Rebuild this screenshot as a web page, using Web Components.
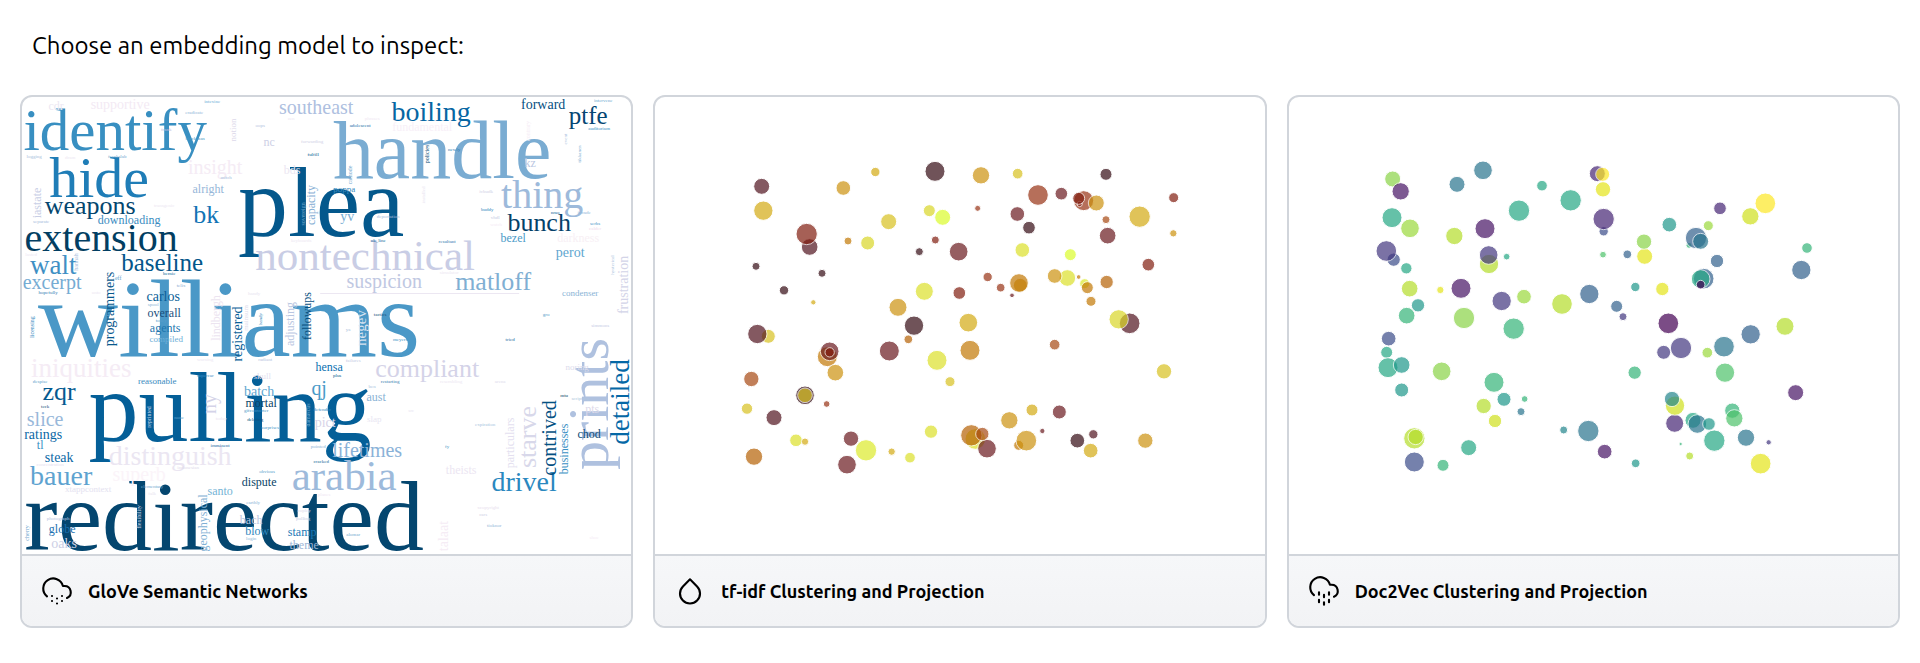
<!DOCTYPE html>
<html lang="en">
<head>
<meta charset="utf-8">
<meta name="viewport" content="width=device-width, initial-scale=1">
<title>Embedding models</title>
<style>
  body { margin: 0; background: #fff; color: #000; font-family: Ubuntu, "Noto Sans", "Open Sans", sans-serif; }
</style>
</head>
<body>
<model-picker>
  <span slot="heading">Choose an embedding model to inspect:</span>
  <embedding-card href="#glove">
    <word-cloud slot="preview"></word-cloud>
    <weather-icon slot="icon" name="snow"></weather-icon>
    GloVe Semantic Networks
  </embedding-card>
  <embedding-card href="#tfidf">
    <scatter-plot slot="preview" data="tfidf"></scatter-plot>
    <weather-icon slot="icon" name="drop"></weather-icon>
    tf-idf Clustering and Projection
  </embedding-card>
  <embedding-card href="#doc2vec">
    <scatter-plot slot="preview" data="doc2vec"></scatter-plot>
    <weather-icon slot="icon" name="drizzle"></weather-icon>
    Doc2Vec Clustering and Projection
  </embedding-card>
</model-picker>

<template id="model-picker">
  <style>
    :host { display: block; padding: 28px 20px 20px; }
    h1 { margin: 0 0 31px; padding: 0 12px; font-size: 24px; line-height: 36px; font-weight: 400; }
    .cards { display: grid; grid-template-columns: repeat(3, minmax(0, 1fr)); gap: 20px; }
  </style>
  <h1><slot name="heading"></slot></h1>
  <div class="cards"><slot></slot></div>
</template>

<template id="embedding-card">
  <style>
    :host { display: block; }
    a { display: block; overflow: hidden; border: 2px solid #d1d5db; border-radius: 12px; color: inherit; text-decoration: none; }
    .bar { display: flex; align-items: center; gap: 16px; padding: 20px; border-top: 2px solid #d1d5db;
           background: linear-gradient(#f6f7f9, #f2f3f5); font-size: 18px; line-height: 30px; font-weight: 700; }
  </style>
  <a>
    <slot name="preview"></slot>
    <div class="bar"><slot name="icon"></slot><span><slot></slot></span></div>
  </a>
</template>

<script>
const stamp = (host, id) => {
  const root = host.attachShadow({ mode: "open" });
  root.append(document.getElementById(id).content.cloneNode(true));
  return root;
};

customElements.define("model-picker", class extends HTMLElement {
  constructor() { super(); stamp(this, "model-picker"); }
});

customElements.define("embedding-card", class extends HTMLElement {
  constructor() { super(); stamp(this, "embedding-card"); }
  connectedCallback() { this.shadowRoot.querySelector("a").href = this.getAttribute("href"); }
});

const ICONS = {
  snow: '<path d="M20 17.58A5 5 0 0 0 18 8h-1.26A8 8 0 1 0 4 16.25M8 16h.01M8 20h.01M12 18h.01M12 22h.01M16 16h.01M16 20h.01"/>',
  drop: '<path d="M12 2.69l5.66 5.66a8 8 0 1 1-11.31 0z"/>',
  drizzle: '<path d="M8 19v2M8 13v2M16 19v2M16 13v2M12 21v2M12 15v2M20 16.58A5 5 0 0 0 18 7h-1.26A8 8 0 1 0 4 15.25"/>'
};
customElements.define("weather-icon", class extends HTMLElement {
  connectedCallback() {
    if (this.shadowRoot) return;
    this.attachShadow({ mode: "open" }).innerHTML = `
      <style>:host { display: block; width: 30px; height: 30px; flex: none; } svg { display: block; overflow: visible; }</style>
      <svg viewBox="0 0 24 24" width="30" height="30" fill="none" stroke="#000" stroke-width="1.7"
        stroke-linecap="round" stroke-linejoin="round" aria-hidden="true">${ICONS[this.getAttribute("name")]}</svg>`;
  }
});

// word | centre x | baseline y | size | colour | v = runs upwards
const WORDS = `
williams|229|356|111|4a98c7
redirected|224|550|100|04466f
pulling|230|441|100|045f98
plea|321|236|100|04588c
handle|442|178|82|7aacd2
identify|115|150|59|388fc1
hide|99|197|58|1f7db7
prints|608|404|58|afc1df|v
nontechnical|365|270|43|c9cde5
arabia|344|490|43|9dbadb
thing|542|208|40|9dbadb
extension|101|251|40|023e62
distinguish|170|465|28|ebe6f2
boiling|431|121|28|0666a3
bauer|61|485|28|5ea3d0
drivel|524|491|28|2a88bf
detailed|629|402|27|0568a6|v
iniquities|81|377|27|f5ecf5
walt|53|274|27|3f90c4
compliant|427|377|26|d4d3e8
starve|536|437|26|d8d8ea|v
weapons|90|214|26|04466e
bk|206|223|26|1274b5
matloff|493|290|26|80afd3
bunch|539|231|26|044169
zqr|59|400|26|045a90
baseline|162|271|25|04568a
ptfe|588|124|25|044673
excerpt|52|289|20|76acd3
insight|215|174|20|f5ecf5
southeast|316|114|20|aebfdf
suspicion|384|288|20|c0c8e2
qj|319|395|20|4a9ac8
slice|45|426|20|98b8da
superb|139|481|20|fbf4f9
lifetimes|367|457|20|8ab2d8
ny|216|404|20|d4d3e8|v
contrived|556|438|20|045082|v
negev|366|328|15|d6e2f0|v
programmers|114|309|14|08588c|v
registered|242|334|14|0a5f98|v
frustration|628|285|14|d3d4e8|v
talaat|448|536|14|f5ecf5|v
supportive|120|109|14|f3eaf4
carlos|163|301|14|0a5f98
forward|543|109|14|045082
yv|347|221|14|76acd3
perot|570|257|14|5ea6cf
batch|259|396|14|5ea6d0
ratings|43|439|14|0a68a6
steak|59|462|14|0a68a6
pict|325|427|14|d8d4e8
oaks|64|548|14|cdcfe5
downloading|129|224|12|3a8bc0
alright|208|193|12|96b6d8
cdr|56|110|12|ece7f2
nc|269|146|12|cdd0e6
bds|292|174|12|ece7f2
iastate|41|203|12|c8cee5|v
capacity|315|205|12|88b0d5|v
overall|164|317|12|1a4f7c
agents|165|332|12|1e76ae
lindbergh|220|318|12|ece4f0|v
adjusting|294|324|12|b9c6e1|v
followups|311|316|12|08507f|v
fundamental|422|131|12|f8f0f8
kz|530|167|12|b9c6e1
bezel|513|242|12|4a9ac8
darkness|578|242|12|f8f0f5
hensa|329|371|12|0a70b0
aust|376|401|12|8ab2d5
mortal|261|407|12|083f66
tl|40|449|12|3a90c4
dispute|259|486|12|083f66
santo|220|495|12|76b4d6
geophysical|207|523|12|7fb0d4|v
bach|251|524|12|b9c6e1
blow|257|535|12|2f86bd
stamp|302|536|12|1a78b5
theme|304|549|12|9db5d6
globe|62|533|12|1a70b0
theists|461|474|12|ece6f2
particulars|514|443|12|e4dff0|v
businesses|568|449|12|3a90c4|v
pts|592|413|12|ddd9ea
chod|589|438|12|0a4a75
notion|236|130|9|ddd9ea|v
compiled|166|342|9|6fb0d8
poppa|344|192|9|3a8bc0
condenser|580|296|9|8ab4d6
skull|262|379|9|e4dff0
reasonable|157|384|9|3a8bc0
xtappcontext|88|492|9|e4e2f0
slap|374|422|9|e8e6f2
noring|577|370|9|dcdcec
intexine|212|103|5|6aaed6
eradicate|194|114|5|8fb6d8
frank|166|131|5|c0c0e0
blackman|195|140|5|4a98c7
oops|260|127|5|b5c4e0
zen|291|120|5|ece7f2
forwarding|312|143|5|d0d1e6
fulfill|313|156|5|045a8d
logging|34|158|5|a6bddb
dram|70|159|5|ece7f2
frankslab|117|158|5|74a9cf
mitch|226|179|5|a6bddb
transgenic|164|207|5|ece7f2
separate|41|223|5|a6bddb
sovereign|305|214|6|74a9cf|v
lasted|31|256|5|ece7f2
hannah|78|262|6|a6bddb|v
bernie|169|275|5|0a5f95
eff|118|280|6|5fa3cd
hopefully|48|294|5|2f7ab0
telix|181|287|5|88aed0
unto|96|294|5|ece7f2
keyboards|301|242|5|ece7f2
handy|254|295|5|e8e4f0
spool|153|306|5|8ab4d6
toney|161|322|5|5a9fcc
licensing|34|327|6|2f86bd|v
mainsum|248|318|7|dcdcec|v
handy|262|319|5|2a80b8|v
intervene|603|102|5|6aa8d0
auditorium|599|130|5|3a90c4
phrases|372|120|5|f0e8f3
adolescent|360|127|5|1a70a8
policies|429|154|6|044a75|v
newly|454|151|5|2a78b0
contrary|530|131|6|f5ecf5|v
event|567|139|5|a6bddb|v
tikkanen|581|154|5|74a9cf|v
cathode|352|175|6|74a9cf|v
ivbudk|486|193|5|d0d1e6
installed|425|195|5|e8e4f0|v
deportation|388|218|5|a6bddb
buddy|487|211|5|2f86bd
vhdl|495|219|5|c5cbe4
watch|496|226|5|f5ecf5
nrao|555|214|5|0a5f98
invade|584|214|5|8fb6d8
serbs|595|225|5|4a98c7
calder|595|230|5|f0dcec
ok_line|378|242|5|0a5f98
resultant|447|243|5|2f7ab0
hysterical|614|265|5|a6bddb|v
simmons|600|327|5|c5cbe4
gro|546|316|5|4a98c7
tactics|380|316|5|1a4f7c
simulator|449|274|5|ece7f2
ya|348|331|5|a6bddb
meyers|400|341|5|3a90c4
tried|510|341|5|1a6aa0
failures|353|362|5|c5cbe4
plus|337|377|5|045a8d
restarting|390|383|5|3a80b0
resembling|451|383|5|ece7f2
arena|500|383|5|dcdcec
ben|372|388|5|a6c4de
gifconverter|256|412|5|4a98c7
deleting|255|421|5|0a4f80
surprises|270|429|5|4a98c7
supercar|205|377|5|3a90c4
warning|205|361|5|ece7f2
radiant|265|361|5|b5c4e0
despise|40|383|5|5a9fcc
teck|45|408|5|1a4f7c
concentration|50|466|5|e4e0f0
reprinted|151|417|6|c5d4e8|v
none|179|419|5|5a9fcc
today|221|420|5|ece7f2
imminent|220|447|5|1a6aa0
damascus|310|415|6|74a9cf|v
defender|322|411|5|2f86bd
src|411|412|5|e8e6f2
pointed|318|448|5|8ab4d6
cracked|321|463|5|1a6a9a
obvious|267|473|5|5a9fcc
earthly|253|504|5|8ab4d6
login|251|540|5|8ab4d6
polling|303|520|5|c5cbe4
copley|304|512|5|e0dcec
alomar|353|536|5|74a9cf
planes|324|496|5|f0e8f3
indonesian|188|469|5|ddd9ea
elementary|152|488|5|74a9cf
falk|152|495|5|e8e4f0
flexibility|141|517|6|d0d8ea|v
photograph|58|520|5|b5c4e0
cherry|29|533|6|74a9cf|v
mtu|564|397|5|083f66
scripting|580|400|5|b0c8e0
expiration|485|426|5|a6c4de
fy|447|448|5|4a98c7
xcopyright|488|509|5|e8e0ee
cars|483|516|5|d0d1e6
tioknor|494|527|5|8fb6d8
shoe|594|539|5|f5ecf5`;

customElements.define("word-cloud", class extends HTMLElement {
  connectedCallback() {
    if (this.shadowRoot) return;
    const words = WORDS.trim().split("\n").map(line => {
      const [text, x, y, size, colour, up] = line.split("|");
      const place = up ? `transform="translate(${x} ${y}) rotate(-90)"` : `x="${x}" y="${y}"`;
      return `<text ${place} font-size="${size}" fill="#${colour}">${text}</text>`;
    }).join("");
    this.attachShadow({ mode: "open" }).innerHTML = `
      <style>
        :host { display: block; }
        svg { display: block; width: 100%; aspect-ratio: 4 / 3; }
        text { font-family: "Liberation Serif", serif; text-anchor: middle; }
      </style>
      <svg viewBox="22 97 609 457" role="img" aria-label="Word cloud">
        <rect x="320" y="293" width="199" height="1" fill="#ece7f2"/>${words}
      </svg>`;
  }
});

// Each point: x y radius colour-key
const PLOTS = {
  tfidf: {
    viewBox: "-225 -159 1828 1371",
    colours: { K: "#340b13", M: "#51131f", R: "#6a1a1f", S: "#811d10", T: "#983315", U: "#a84a13", O: "#b66205",
      P: "#c27906", Q: "#cd9210", V: "#d4ab13", W: "#d8c120", X: "#dad728", Y: "#dce02a", Z: "#dcea2a", L: "#dbfc2a" },
    points: `95 109 23 M,100 182 28 V,340 114 21 Q,436 66 13 V,615 64 29 K,753 76 25 Q,863 71 15 W,924 135 30 T,994 131 18 R,
1128 73 17 K,1061 152 29 T,1049 162 7 S,1046 145 17 S,1099 159 23 Q,1331 143 14 S,743 175 8 T,598 182 17 X,638 202 23 L,
476 215 23 W,862 192 21 R,897 233 18 K,1128 209 11 U,1229 200 31 V,1330 250 10 Q,1133 257 24 R,239 291 24 M,230 252 31 S,
354 273 11 P,413 279 20 X,616 270 11 S,568 305 11 K,686 305 27 R,877 300 21 Y,1021 314 17 L,1255 344 18 S,78 349 11 K,
276 370 11 K,162 421 13 K,250 457 7 V,773 381 13 T,871 406 20 Q,867 399 27 P,812 413 12 T,846 436 6 R,1012 384 24 Y,
974 378 21 Q,1046 381 6 P,1064 401 14 Z,1072 413 17 P,1130 396 19 O,1083 454 14 P,583 424 26 Y,688 429 18 S,504 472 26 Q,
552 527 28 K,715 518 27 V,1199 520 30 M,1166 508 28 X,115 559 20 W,82 552 28 M,535 568 12 O,478 603 29 R,720 601 29 P,
292 620 29 P,299 604 27 R,299 607 13 S,974 584 15 U,316 668 24 Q,621 631 29 Y,64 687 22 U,660 695 14 W,1302 664 22 W,
225 736 27 K,225 736 21 W,290 762 9 T,51 776 16 W,132 803 23 M,198 871 18 Y,225 875 10 V,363 866 22 R,603 845 19 Y,
408 901 31 Z,351 944 27 R,485 905 10 V,540 923 15 Y,72 920 25 O,736 867 30 Y,771 896 27 R,724 856 31 O,757 852 19 U,
838 811 25 Q,906 780 17 V,988 786 20 R,937 843 7 R,866 886 14 P,889 872 30 Q,1042 872 21 K,1090 853 13 M,1082 902 21 V,1246 872 22 Q`
  },
  doc2vec: {
    viewBox: "-214 -159 1828 1371",
    colours: { A: "#440154", B: "#471365", C: "#462474", D: "#43377f", E: "#3c4d8a", F: "#32618d", G: "#29748e", H: "#23868d",
      I: "#1f988b", J: "#25a884", K: "#35b478", L: "#4ec26a", M: "#72cf56", N: "#8ad347", O: "#9bd93c", P: "#b5de2b", Q: "#cfe11c", R: "#e4e419", S: "#fde725" },
    points: `97 87 23 N,121 124 25 B,95 203 29 J,149 235 27 O,100 329 19 E,78 303 30 D,138 355 16 J,148 416 24 P,173 466 19 I,139 497 24 K,
85 566 21 E,79 607 17 J,83 653 29 J,124 645 24 I,124 720 20 I,290 103 23 G,368 61 27 G,282 258 25 P,374 236 29 B,386 342 28 P,
385 315 27 D,439 320 9 J,476 182 31 J,545 107 15 J,631 151 31 J,240 420 10 R,302 415 29 B,424 453 28 D,491 440 21 O,311 504 31 N,
460 536 31 K,605 462 30 P,687 432 28 F,769 469 17 F,788 500 11 D,825 411 13 I,906 417 19 R,711 71 23 C,727 73 20 S,728 118 22 R,
730 244 13 E,730 207 31 C,728 314 9 L,801 313 12 F,853 319 23 R,851 275 22 N,927 224 21 I,986 286 8 K,1007 264 31 F,1021 274 23 G,1044 227 14 O,
1079 175 18 C,1170 199 25 Q,1215 160 30 S,1340 294 15 K,1323 360 28 F,1070 333 19 F,1030 386 30 F,1021 387 27 J,1021 404 12 A,924 520 30 A,
910 607 20 D,962 594 31 D,1041 608 15 O,1091 590 30 G,1171 553 28 F,1274 529 26 P,1094 668 28 L,1306 728 23 B,823 668 19 K,
244 664 27 N,401 697 29 K,370 768 22 P,431 748 20 I,404 813 19 Q,493 747 9 K,482 785 11 G,162 865 31 P,166 861 22 P,162 936 29 E,
248 946 17 K,325 893 23 J,610 840 11 H,684 843 31 G,733 905 21 B,826 940 12 I,943 820 26 C,944 767 28 Q,935 747 22 H,
998 811 23 J,1011 822 27 G,1046 822 18 I,1062 872 31 J,1116 782 22 K,1122 805 25 L,1157 863 25 G,1225 877 7 D,961 882 4 K,988 918 11 P,1201 941 30 R`
  }
};

customElements.define("scatter-plot", class extends HTMLElement {
  connectedCallback() {
    if (this.shadowRoot) return;
    const { viewBox, colours, points } = PLOTS[this.getAttribute("data")];
    const dots = points.split(",").map(p => {
      const [x, y, r, key] = p.trim().split(" ");
      return `<circle cx="${x}" cy="${y}" r="${+r + 1}" fill="${colours[key]}"/>`;
    }).join("");
    this.attachShadow({ mode: "open" }).innerHTML = `
      <style>
        :host { display: block; }
        svg { display: block; width: 100%; aspect-ratio: 4 / 3; }
        circle { stroke: #fff; stroke-width: 3; opacity: .7; }
      </style>
      <svg viewBox="${viewBox}" role="img" aria-label="Scatter plot of document clusters">${dots}</svg>`;
  }
});
</script>
</body>
</html>
